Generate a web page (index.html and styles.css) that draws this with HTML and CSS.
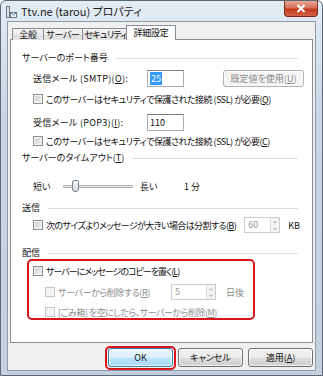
FILE: index.html
```html
<!DOCTYPE html>
<html lang="ja">
<head>
  <meta charset="UTF-8" />
  <title>Ttv.ne (tarou) プロパティ</title>
  <link rel="stylesheet" href="styles.css">
</head>
<body>
  <div class="window">
    <div class="titlebar">
      <svg class="app-icon" width="11" height="12" viewBox="0 0 11 12">
        <rect x="0.5" y="0.5" width="3" height="11" fill="#dfe3e8" stroke="#6c7684" />
        <rect x="4.5" y="6.5" width="6" height="5" fill="#f4f6f8" stroke="#6c7684" />
        <path d="M5 7 L7.5 9 L10 7" fill="none" stroke="#3a76b8" />
      </svg>
      <span class="title">Ttv.ne (tarou) プロパティ</span>
      <div class="close-btn">
        <svg width="10" height="9" viewBox="0 0 10 9">
          <path d="M1.5 1 L8.5 8 M8.5 1 L1.5 8" stroke="#fff" stroke-width="2" />
        </svg>
      </div>
    </div>

    <div class="client">
      <div class="tabs">
        <div class="tab tab-general">全般</div>
        <div class="tab tab-server">サーバー</div>
        <div class="tab tab-security">セキュリティ</div>
        <div class="tab tab-advanced active">詳細設定</div>
      </div>

      <div class="panel">
        <div class="group-head head-port"><span>サーバーのポート番号</span></div>

        <div class="row row-smtp">
          <span class="label">送信メール (SMTP)(<u>O</u>):</span>
          <div class="textbox"><span class="sel">25</span></div>
          <div class="btn btn-disabled btn-default-port">既定値を使用(<u>U</u>)</div>
        </div>

        <div class="row row-check row-ssl1">
          <span class="checkbox"></span>
          <span>このサーバーはセキュリティで保護された接続 (SSL) が必要(<u>Q</u>)</span>
        </div>

        <div class="row row-pop">
          <span class="label">受信メール (POP3)(<u>I</u>):</span>
          <div class="textbox">110</div>
        </div>

        <div class="row row-check row-ssl2">
          <span class="checkbox"></span>
          <span>このサーバーはセキュリティで保護された接続 (SSL) が必要(<u>C</u>)</span>
        </div>

        <div class="group-head head-timeout"><span>サーバーのタイムアウト(<u>T</u>)</span></div>

        <div class="row row-slider">
          <span class="slider-short">短い</span>
          <div class="slider">
            <div class="track"></div>
            <div class="thumb"></div>
          </div>
          <span class="slider-long">長い</span>
          <span>1 分</span>
        </div>

        <div class="group-head head-send"><span>送信</span></div>

        <div class="row row-check row-split">
          <span class="checkbox"></span>
          <span>次のサイズよりメッセージが大きい場合は分割する(<u>B</u>)</span>
          <div class="spinbox spin-split">
            <span class="spin-value">60</span>
            <div class="spin-buttons"><span class="arrow-up"></span><span class="arrow-down"></span></div>
          </div>
          <span class="unit">KB</span>
        </div>

        <div class="group-head head-deliver"><span>配信</span></div>

        <div class="deliver">
          <div class="row row-check row-copy">
            <span class="checkbox"></span>
            <span>サーバーにメッセージのコピーを置く(<u>L</u>)</span>
          </div>
          <div class="row row-check row-remove disabled">
            <span class="checkbox"></span>
            <span class="remove-label">サーバーから削除する(<u>R</u>)</span>
            <div class="spinbox spin-days">
              <span class="spin-value">5</span>
              <div class="spin-buttons"><span class="arrow-up"></span><span class="arrow-down"></span></div>
            </div>
            <span class="unit">日後</span>
          </div>
          <div class="row row-check row-trash disabled">
            <span class="checkbox"></span>
            <span>[ごみ箱] を空にしたら、サーバーから削除(<u>M</u>)</span>
          </div>
          <div class="mark mark-deliver"></div>
        </div>
      </div>

      <div class="buttons">
        <div class="btn btn-ok">OK<div class="mark mark-ok"></div></div>
        <div class="btn">キャンセル</div>
        <div class="btn">適用(<u>A</u>)</div>
      </div>
    </div>
  </div>
</body>
</html>
```

FILE: styles.css
```css
* {
  box-sizing: border-box;
}

body {
  margin: 0;
  padding: 0;
  background: #fff;
  font-family: "Noto Sans CJK JP", "Noto Sans", sans-serif;
  font-size: 9px;
  font-feature-settings: "palt" 1;
  color: #111;
}

u {
  text-decoration: underline;
  text-underline-offset: 1px;
}

.window {
  width: 323px;
  height: 376px;
  display: flex;
  flex-direction: column;
  padding: 0 6px 4px 6px;
  background: linear-gradient(to bottom, #e4ecf4, #c9d6e4 30%, #c3d0de);
  border: 1px solid #5b6876;
  border-radius: 6px 6px 0 0;
}

/* title bar */
.titlebar {
  height: 20px;
  display: flex;
  align-items: center;
  position: relative;
}

.app-icon {
  margin-left: -1px;
  margin-top: 2px;
}

.title {
  margin-left: 4px;
  font-size: 11px;
  color: #1a1a1a;
}

.close-btn {
  position: absolute;
  top: 0;
  right: -2px;
  width: 34px;
  height: 16px;
  display: flex;
  align-items: center;
  justify-content: center;
  background: linear-gradient(to bottom, #e8a796, #d7725a 45%, #c2391c 55%, #d5614a);
  border: 1px solid #7d2a1c;
  border-top: none;
  border-radius: 0 0 4px 4px;
}

/* client area */
.client {
  flex: 1;
  display: flex;
  flex-direction: column;
  padding: 4px 2px 0 2px;
  background: #f0f0f0;
  border: 1px solid #8d9aa8;
}

.tabs {
  height: 14px;
  display: flex;
  align-items: flex-end;
  padding-left: 2px;
  position: relative;
  z-index: 1;
  margin-bottom: -1px;
}

.tab {
  height: 12px;
  display: flex;
  align-items: center;
  justify-content: center;
  white-space: nowrap;
  letter-spacing: -0.3px;
  background: linear-gradient(to bottom, #f3f3f3, #ebebeb 50%, #dedede 51%, #e5e5e5);
  border: 1px solid #898c95;
  border-bottom: none;
  margin-right: -1px;
  line-height: 1;
}

.tab-general { width: 32px; }
.tab-server { width: 40px; }
.tab-security { width: 47px; letter-spacing: -0.7px; }

.tab.active {
  width: 50px;
  height: 15px;
  background: #fff;
  margin-left: -2px;
  margin-right: 0;
  padding-bottom: 2px;
}

.panel {
  height: 304px;
  background: #fff;
  border: 1px solid #898c95;
  padding: 9px 8px 0 11px;
  display: flex;
  flex-direction: column;
}

.group-head {
  height: 16px;
  display: flex;
  align-items: center;
  white-space: nowrap;
}

.group-head::after {
  content: "";
  flex: 1;
  height: 1px;
  margin: 2px 6px 0 8px;
  background: #d5dfe5;
}

.head-timeout { margin-top: 0; }
.head-send { margin-top: 4px; }
.head-deliver { margin-top: 10px; }

.row {
  display: flex;
  align-items: center;
  margin-left: 11px;
  white-space: nowrap;
  height: 16px;
}

.row-smtp { height: 18px; margin-top: 4px; letter-spacing: 0.3px; }
.row-ssl1 { margin-top: 4px; }
.row-pop { height: 18px; margin-top: 6px; letter-spacing: 0.3px; }
.row-ssl2 { margin-top: 2px; }
.row-slider { height: 18px; margin-top: 12px; }
.row-split { height: 18px; margin-top: 1px; margin-right: 4px; letter-spacing: -0.6px; }

.row-ssl1,
.row-ssl2 {
  letter-spacing: -0.5px;
}

.label {
  width: 114px;
}

.textbox {
  width: 37px;
  height: 17px;
  border: 1px solid #abadb3;
  border-top-color: #7a7d84;
  background: #fff;
  padding: 1px 2px;
  line-height: 13px;
  letter-spacing: 0;
}

.sel {
  display: inline-block;
  background: #3399ff;
  color: #fff;
  padding: 0 1px;
}

.btn {
  height: 19px;
  display: flex;
  align-items: center;
  justify-content: center;
  border: 1px solid #707070;
  border-radius: 3px;
  background: linear-gradient(to bottom, #f2f2f2, #ebebeb 50%, #dddddd 51%, #cfcfcf);
  box-shadow: inset 0 0 0 1px rgba(255, 255, 255, 0.7);
  position: relative;
  letter-spacing: 0;
}

.btn-disabled {
  color: #8b8b8b;
  border-color: #adb2b5;
  background: #f4f4f4;
}

.btn-default-port {
  margin-left: auto;
  width: 81px;
  height: 17px;
}

.checkbox {
  width: 10px;
  height: 10px;
  margin-right: 3px;
  border: 1px solid #8e8f8f;
  background: linear-gradient(135deg, #c9ced4, #f3f4f5);
  box-shadow: inset 0 0 0 1px #f4f4f4;
  flex-shrink: 0;
}

/* slider */
.slider-short {
  width: 30px;
}

.slider {
  width: 70px;
  height: 18px;
  position: relative;
  display: flex;
  align-items: center;
}

.track {
  width: 100%;
  height: 3px;
  background: #e7eaea;
  border: 1px solid #b0b0b0;
  border-radius: 1px;
}

.thumb {
  position: absolute;
  left: 9px;
  top: 3px;
  width: 7px;
  height: 12px;
  border: 1px solid #7b8793;
  border-radius: 2px 2px 3px 3px;
  background: linear-gradient(to bottom, #f6f6f6, #dadcde);
}

.slider-long {
  width: 44px;
  margin-left: 7px;
}

/* spin boxes */
.spinbox {
  height: 16px;
  display: flex;
  border: 1px solid #c9cccf;
  background: #fff;
  letter-spacing: 0;
}

.spin-split {
  margin-left: auto;
  width: 36px;
}

.spin-value {
  flex: 1;
  color: #9a9a9a;
  padding-left: 3px;
  line-height: 14px;
}

.spin-buttons {
  width: 9px;
  display: flex;
  flex-direction: column;
  border-left: 1px solid #dcdcdc;
  background: #f2f2f2;
}

.spin-buttons span {
  flex: 1;
  display: flex;
  align-items: center;
  justify-content: center;
}

.arrow-up::before {
  content: "";
  border: 2px solid transparent;
  border-bottom: 2px solid #b8b8b8;
  margin-top: -2px;
}

.arrow-down::before {
  content: "";
  border: 2px solid transparent;
  border-top: 2px solid #b8b8b8;
  margin-bottom: -2px;
}

.unit {
  margin-left: 8px;
  letter-spacing: 0;
}

/* delivery group */
.deliver {
  position: relative;
  margin-top: 3px;
}

.row-copy { margin-top: 0; letter-spacing: -1px; }
.row-remove { height: 18px; margin-top: 4px; margin-left: 23px; letter-spacing: -0.4px; }
.row-trash { margin-top: 3px; margin-left: 23px; letter-spacing: -0.5px; }

.disabled {
  color: #8d8d8d;
}

.disabled .checkbox {
  border-color: #c5c5c5;
  background: #f4f4f4;
  box-shadow: none;
}

.remove-label {
  width: 113px;
}

.spin-days {
  width: 45px;
  height: 16px;
}

.row-remove .unit {
  margin-left: 10px;
}

/* red highlight marks */
.mark {
  position: absolute;
  border: 2px solid #d9141b;
  border-radius: 5px;
  pointer-events: none;
}

.mark-deliver {
  left: 5px;
  top: -4px;
  width: 228px;
  height: 61px;
}

.mark-ok {
  left: -4px;
  top: -3px;
  right: -4px;
  bottom: -4px;
}

/* bottom buttons */
.buttons {
  display: flex;
  justify-content: flex-end;
  gap: 5px;
  margin-top: 5px;
}

.buttons .btn {
  width: 65px;
}

.btn-ok {
  border-color: #3c7fb1;
  background: linear-gradient(to bottom, #eaf6fd, #d9f0fc 50%, #bee6fd 51%, #a7d9f5);
}
```
